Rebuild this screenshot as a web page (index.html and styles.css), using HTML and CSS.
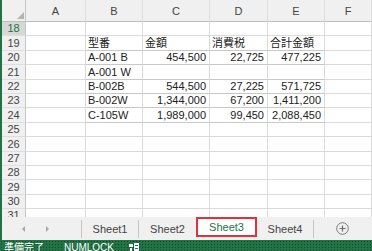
FILE: index.html
```html
<!DOCTYPE html>
<html lang="ja">
<head>
<meta charset="utf-8">
<link rel="stylesheet" href="styles.css">
</head>
<body>
<div class="window">
  <div class="main">
    <div class="grid">
      <div class="c corner"><span class="tri"></span></div>
      <div class="c ch">A</div><div class="c ch">B</div><div class="c ch">C</div><div class="c ch">D</div><div class="c ch">E</div><div class="c ch">F</div>

      <div class="c rh sel">18</div><div class="c"></div><div class="c"></div><div class="c"></div><div class="c"></div><div class="c"></div><div class="c"></div>
      <div class="c rh">19</div><div class="c"></div><div class="c t">型番</div><div class="c t">金額</div><div class="c t">消費税</div><div class="c t">合計金額</div><div class="c"></div>
      <div class="c rh">20</div><div class="c"></div><div class="c t">A-001 B</div><div class="c t n">454,500</div><div class="c t n">22,725</div><div class="c t n">477,225</div><div class="c"></div>
      <div class="c rh">21</div><div class="c"></div><div class="c t">A-001 W</div><div class="c t"></div><div class="c t"></div><div class="c t"></div><div class="c"></div>
      <div class="c rh">22</div><div class="c"></div><div class="c t">B-002B</div><div class="c t n">544,500</div><div class="c t n">27,225</div><div class="c t n">571,725</div><div class="c"></div>
      <div class="c rh">23</div><div class="c"></div><div class="c t">B-002W</div><div class="c t n">1,344,000</div><div class="c t n">67,200</div><div class="c t n">1,411,200</div><div class="c"></div>
      <div class="c rh">24</div><div class="c"></div><div class="c t">C-105W</div><div class="c t n">1,989,000</div><div class="c t n">99,450</div><div class="c t n">2,088,450</div><div class="c"></div>
      <div class="c rh">25</div><div class="c"></div><div class="c"></div><div class="c"></div><div class="c"></div><div class="c"></div><div class="c"></div>
      <div class="c rh">26</div><div class="c"></div><div class="c"></div><div class="c"></div><div class="c"></div><div class="c"></div><div class="c"></div>
      <div class="c rh">27</div><div class="c"></div><div class="c"></div><div class="c"></div><div class="c"></div><div class="c"></div><div class="c"></div>
      <div class="c rh">28</div><div class="c"></div><div class="c"></div><div class="c"></div><div class="c"></div><div class="c"></div><div class="c"></div>
      <div class="c rh">29</div><div class="c"></div><div class="c"></div><div class="c"></div><div class="c"></div><div class="c"></div><div class="c"></div>
      <div class="c rh">30</div><div class="c"></div><div class="c"></div><div class="c"></div><div class="c"></div><div class="c"></div><div class="c"></div>
      <div class="c rh">31</div><div class="c"></div><div class="c"></div><div class="c"></div><div class="c"></div><div class="c"></div><div class="c"></div>
    </div>
    <div class="tabbar">
      <div class="nav"><span class="arr left"></span><span class="arr right"></span></div>
      <div class="tab sep">Sheet1</div>
      <div class="tab">Sheet2</div>
      <div class="tab active">Sheet3</div>
      <div class="tab sep">Sheet4</div>
      <div class="add">
        <svg width="13" height="13" viewBox="0 0 13 13"><circle cx="6.5" cy="6.5" r="5.8" fill="none" stroke="#7a7a7a" stroke-width="1"/><path d="M6.5 3.5v6M3.5 6.5h6" stroke="#6a6a6a" stroke-width="1.2"/></svg>
      </div>
    </div>
  </div>
  <div class="status">
    <span class="st-ready">準備完了</span>
    <span class="st-num">NUMLOCK</span>
    <svg class="st-icon" width="10" height="9" viewBox="0 0 10 9"><rect x="0" y="1" width="4" height="3" fill="#fff"/><rect x="5" y="0" width="5" height="9" fill="#fff"/><rect x="6" y="2" width="3" height="1" fill="#217346"/><rect x="6" y="5" width="3" height="1" fill="#217346"/><rect x="1" y="5" width="2" height="4" fill="#fff"/></svg>
  </div>
</div>
</body>
</html>
```
FILE: styles.css
```css
body {
  margin: 0;
  background: #fff;
}
.window {
  width: 372px;
  height: 251px;
  overflow: hidden;
  font-family: "Liberation Sans", "Noto Sans CJK JP", sans-serif;
}
.main {
  border-left: 2px solid #217346;
}
.grid {
  height: 217px;
  overflow: hidden;
  display: grid;
  grid-template-columns: 24px 60px 57px 67px 58px 57px 1fr;
  grid-template-rows: 22px;
  grid-auto-rows: 14.4px;
}
.c {
  border-right: 1px solid #dadada;
  border-bottom: 1px solid #dadada;
  font-size: 11px;
  line-height: 12px;
  color: #222;
  display: flex;
  align-items: flex-end;
  padding: 0 2px 1px;
  white-space: nowrap;
  overflow: hidden;
  min-width: 0;
}
.t {
  border-bottom-color: #c8c8c8;
}
.n {
  justify-content: flex-end;
  padding-right: 3px;
}
.corner {
  background: #f0f0f0;
  border-bottom-color: #bdbdbd;
  border-right-color: #c6c6c6;
  position: relative;
}
.tri {
  position: absolute;
  right: 1px;
  bottom: 2px;
  width: 0;
  height: 0;
  border-left: 7px solid transparent;
  border-bottom: 7px solid #b4b4b4;
}
.ch {
  background: #f0f0f0;
  color: #444;
  justify-content: center;
  border-bottom-color: #bdbdbd;
  border-right-color: #dedede;
  padding-bottom: 4px;
}
.rh {
  background: #f0f0f0;
  color: #444;
  justify-content: center;
  border-right-color: #c6c6c6;
  border-bottom-color: #dedede;
}
.rh.sel {
  background: #d6d8d6;
  color: #217346;
}
.tabbar {
  height: 23px;
  background: #f0f0f0;
  display: flex;
  align-items: stretch;
  font-size: 11px;
  color: #444;
}
.nav {
  width: 80px;
  position: relative;
  border-right: 1px solid #c6c6c6;
  margin: 3px 0 2px;
  box-sizing: border-box;
}
.arr {
  position: absolute;
  top: 6px;
  width: 0;
  height: 0;
  border-top: 3px solid transparent;
  border-bottom: 3px solid transparent;
}
.arr.left {
  left: 20px;
  border-right: 3px solid #a8a8a8;
}
.arr.right {
  left: 44px;
  border-left: 3px solid #a8a8a8;
}
.tab {
  width: 57px;
  display: flex;
  align-items: center;
  justify-content: center;
  box-sizing: border-box;
}
.tab.sep {
  border-right: 1px solid #c6c6c6;
  margin: 3px 0 2px;
}
.tab.active {
  width: 61px;
  height: 20px;
  background: #fff;
  border: 2px solid #e2313a;
  color: #217346;
}
.add {
  width: 57px;
  display: flex;
  align-items: center;
  justify-content: center;
}
.status {
  height: 11px;
  background-color: #217346;
  background-image: radial-gradient(circle, #0e4a2a 0.7px, transparent 0.9px);
  background-size: 3px 3px;
  display: flex;
  align-items: flex-start;
  color: #fff;
  font-size: 10px;
  line-height: 12px;
  padding-top: 2px;
  box-sizing: content-box;
}
.st-ready {
  margin-left: 4px;
}
.st-num {
  margin-left: 20px;
}
.st-icon {
  margin-left: 15px;
  margin-top: 1px;
}
```
